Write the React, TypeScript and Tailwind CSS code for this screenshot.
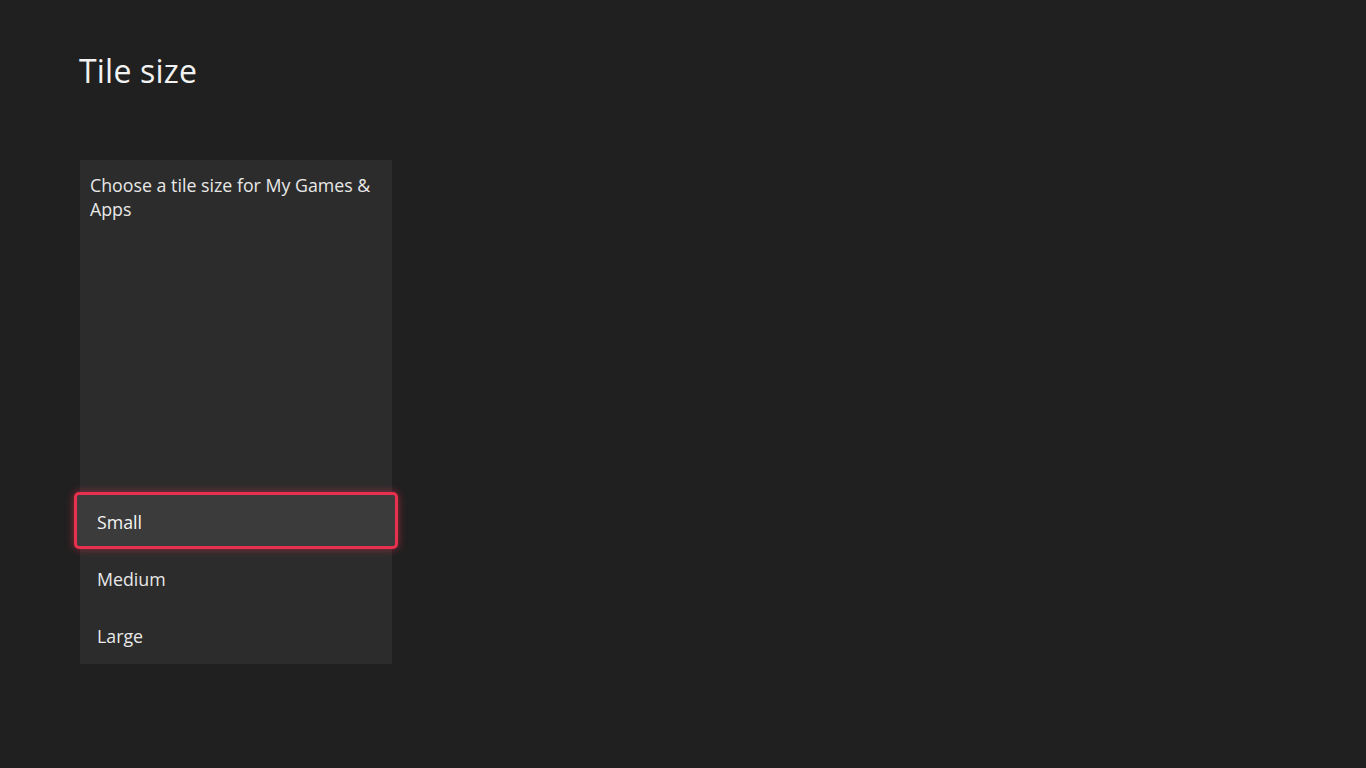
const options = ["Small", "Medium", "Large"];

export default function App() {
  const selected = "Small";

  return (
    <div
      className="min-h-screen w-full bg-[#202020] text-[#f2f2f2] pl-[79px] pt-[49px]"
      style={{ fontFamily: '"Open Sans", "Noto Sans", sans-serif' }}
    >
      <h1 className="text-[32px] leading-[44px] tracking-[0.2px]">Tile size</h1>

      <div className="mt-[67px] ml-px flex h-[504px] w-[312px] flex-col bg-[#2c2c2c]">
        <p className="px-[10px] pt-[13px] text-[17.8px] leading-[24px] text-[#e8e8e8]">
          Choose a tile size for My Games &amp; Apps
        </p>

        <div className="flex-1" />

        <div className="flex flex-col pb-[1px]">
          {options.map((opt) =>
            opt === selected ? (
              <div
                key={opt}
                className="-mx-[6px] flex h-[57px] items-center rounded-[5px] border-[3px] border-[#e8304f] bg-[#3b3b3b] pl-[20px] pt-[4px] text-[17.8px] text-[#f4f4f4] shadow-[0_0_8px_rgba(232,48,79,0.55)]"
              >
                {opt}
              </div>
            ) : (
              <div
                key={opt}
                className="flex h-[57px] items-center pl-[17px] pt-[4px] text-[17.8px] text-[#e8e8e8]"
              >
                {opt}
              </div>
            )
          )}
        </div>
      </div>
    </div>
  );
}
